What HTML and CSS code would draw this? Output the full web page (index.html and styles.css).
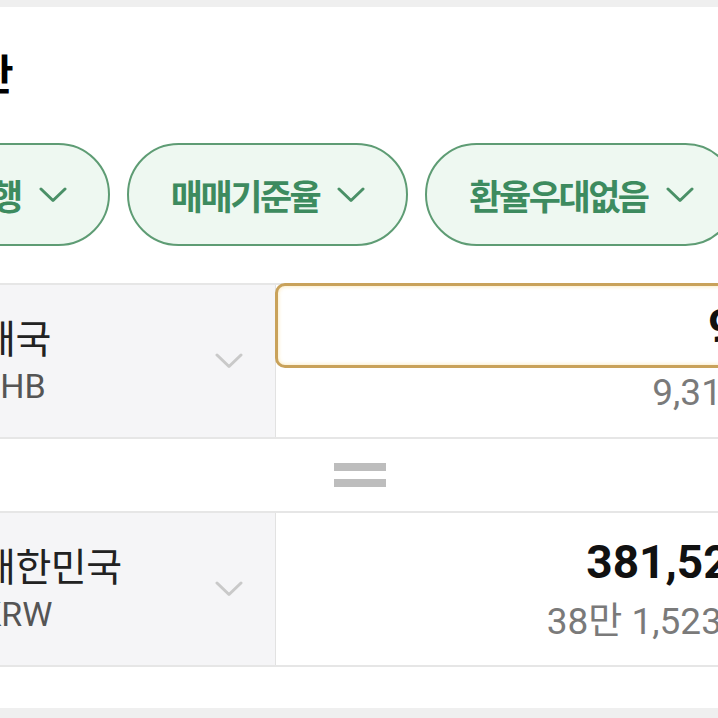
FILE: index.html
```html
<!DOCTYPE html>
<html lang="ko">

<head>
    <meta charset="UTF-8">
    <meta name="viewport" content="width=device-width, initial-scale=1.0">
    <title>환율계산</title>
    <link rel="stylesheet" href="styles.css">
</head>

<body>
    <div class="status-bar"></div>

    <main class="page">
        <h1 class="title">환율계산</h1>

        <div class="chips">
            <button class="chip">
                <span>하나은행</span>
                <svg viewBox="0 0 28 16"><path d="M2 2 L14 13.5 L26 2"/></svg>
            </button>
            <button class="chip">
                <span>매매기준율</span>
                <svg viewBox="0 0 28 16"><path d="M2 2 L14 13.5 L26 2"/></svg>
            </button>
            <button class="chip">
                <span>환율우대없음</span>
                <svg viewBox="0 0 28 16"><path d="M2 2 L14 13.5 L26 2"/></svg>
            </button>
        </div>

        <section class="converter">
            <div class="row">
                <div class="currency">
                    <div class="flag flag-th"></div>
                    <div class="names">
                        <div class="name">태국</div>
                        <div class="code">THB</div>
                    </div>
                    <svg class="chevron" viewBox="0 0 28 16"><path d="M2 2 L14 13.5 L26 2"/></svg>
                </div>
                <div class="amount amount-from">
                    <div class="amount-box">9,310</div>
                    <div class="amount-sub">9,310 바트</div>
                </div>
            </div>

            <div class="equals">
                <span></span>
                <span></span>
            </div>

            <div class="row">
                <div class="currency">
                    <div class="flag flag-kr"></div>
                    <div class="names">
                        <div class="name">대한민국</div>
                        <div class="code">KRW</div>
                    </div>
                    <svg class="chevron" viewBox="0 0 28 16"><path d="M2 2 L14 13.5 L26 2"/></svg>
                </div>
                <div class="amount amount-to">
                    <div class="amount-value">381,523</div>
                    <div class="amount-sub">38만 1,523원</div>
                </div>
            </div>
        </section>
    </main>

    <div class="bottom-bar"></div>
</body>

</html>
```

FILE: styles.css
```css
* {
    box-sizing: border-box;
}

body {
    margin: 0;
    height: 718px;
    overflow: hidden;
    background: #fff;
    font-family: Roboto, "Noto Sans CJK KR", sans-serif;
}

.status-bar {
    height: 7px;
    background: #efefef;
}

.page {
    width: 1080px;
    margin-left: -180px;
    padding: 0 48px;
}

.title {
    margin: 40px 0 0;
    font-family: "Noto Sans CJK KR", sans-serif;
    font-size: 42px;
    line-height: 50px;
    font-weight: 700;
    letter-spacing: -3px;
    color: #000;
}

/* chip row is scrolled a little to the left */
.chips {
    display: flex;
    gap: 17px;
    margin: 46px 0 0 -10px;
}

.chip {
    flex: none;
    display: flex;
    align-items: center;
    gap: 18px;
    height: 103px;
    padding: 0 41px 0 42px;
    border: 2px solid #5e9c74;
    border-radius: 52px;
    background: #eef8f1;
    color: #3d8b5f;
    font-family: "Noto Sans CJK KR", sans-serif;
    font-size: 35px;
    font-weight: 700;
    letter-spacing: -2.5px;
}

.chip svg {
    width: 28px;
    height: 16px;
    fill: none;
    stroke: #4a9067;
    stroke-width: 3;
    stroke-linecap: round;
    stroke-linejoin: round;
}

.converter {
    margin-top: 37px;
}

.row {
    display: flex;
    height: 156px;
    border-top: 2px solid #e6e6e6;
    border-bottom: 2px solid #e6e6e6;
}

.currency {
    flex: none;
    width: 408px;
    display: flex;
    align-items: center;
    padding: 0 32px 0 40px;
    background: #f5f5f7;
    border-right: 1px solid #e2e2e2;
}

.flag {
    width: 56px;
    height: 56px;
    margin-right: 16px;
    border-radius: 50%;
}

.flag-th {
    background: linear-gradient(#a51931 0 17%, #f4f5f8 17% 33%, #2d2a4a 33% 67%, #f4f5f8 67% 83%, #a51931 83%);
}

.flag-kr {
    background: #fff;
    border: 1px solid #ddd;
}

.names {
    flex: 1;
    margin-top: -3px;
}

.name {
    font-family: "Noto Sans CJK KR", sans-serif;
    font-size: 39px;
    line-height: 46px;
    letter-spacing: -0.5px;
    color: #222;
}

.code {
    margin-top: 7px;
    font-size: 34px;
    line-height: 40px;
    color: #555;
}

.chevron {
    width: 28px;
    height: 16px;
    fill: none;
    stroke: #c9c9c9;
    stroke-width: 3;
    stroke-linecap: round;
    stroke-linejoin: round;
}

.amount {
    flex: 1;
    display: flex;
    flex-direction: column;
    align-items: flex-end;
}

.amount-to {
    justify-content: center;
}

.amount-box {
    align-self: stretch;
    height: 85px;
    margin: -2px 0 0 -1px;
    display: flex;
    align-items: center;
    justify-content: flex-end;
    padding-right: 24px;
    border: 3px solid #c9a25a;
    border-radius: 10px;
    background: #fff;
    box-shadow: inset 0 0 4px rgba(250, 220, 140, 0.7);
    font-size: 46px;
    font-weight: 700;
    color: #111;
}

.amount-value {
    font-size: 46px;
    line-height: 54px;
    font-weight: 700;
    color: #111;
    padding-right: 96px;
}

.amount-sub {
    margin-top: 3px;
    padding-right: 32px;
    font-size: 37px;
    line-height: 44px;
    color: #7a7a7a;
}

.amount-to .amount-sub {
    margin-top: 11px;
    padding-right: 96px;
}

.equals {
    height: 72px;
    display: flex;
    flex-direction: column;
    align-items: center;
    justify-content: center;
    gap: 8px;
}

.equals span {
    width: 52px;
    height: 8px;
    background: #bdbdbd;
}

.bottom-bar {
    height: 20px;
    margin-top: 41px;
    background: #efefef;
}
```
